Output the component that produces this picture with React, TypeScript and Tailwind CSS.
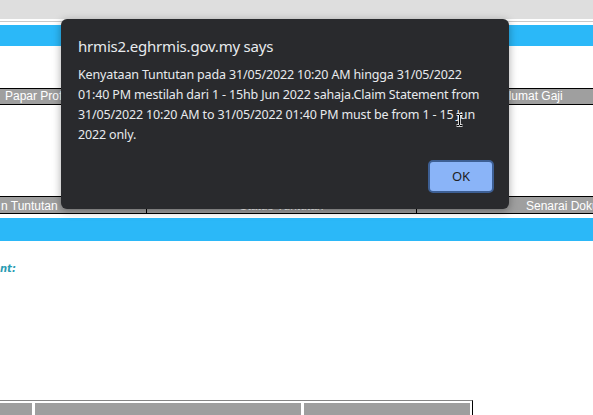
export default function App() {
  const bar = "bg-[#9f9f9f] text-white text-[12px] leading-[15px] whitespace-nowrap";
  return (
    <div className="relative w-[593px] h-[415px] overflow-hidden bg-white" style={{ fontFamily: '"Liberation Sans", Arial, sans-serif' }}>
      {/* page behind the dialog */}
      <div className="h-[19px] bg-[#dedede]" />
      <div className="h-[2px]" />
      <div className="h-px bg-[#c9c9c9]" />
      <div className="h-[3px]" />
      <div className="h-[21px] bg-[#2bb8f8]" />
      <div className="h-[42px]" />

      <div className="flex h-[17px] border-y border-black">
        <div className={`${bar} flex-1 pl-[5px]`}>Papar Profil</div>
        <div className={`${bar} w-[112px] shrink-0 border-l border-black pl-[4px]`}>Maklumat Gaji</div>
      </div>

      <div className="h-[91px]" />

      <div className="flex h-[18px] border-y border-black">
        <div className={`${bar} w-[146px] shrink-0 pt-[2px] pl-px`}>n Tuntutan</div>
        <div className={`${bar} w-[270px] shrink-0 border-l border-black pt-[2px] text-center`}>Status Tuntutan</div>
        <div className={`${bar} flex-1 min-w-0 overflow-hidden border-l border-black pt-[2px] pl-[109px]`}>Senarai Dokumen</div>
      </div>

      <div className="h-[4px]" />
      <div className="h-[23px] bg-[#2bb8f8]" />

      <div className="h-[21px]" />
      <div className="text-[10px] leading-[13px] italic font-bold text-[#2a9cb3]" style={{ fontFamily: '"DejaVu Sans", Verdana, sans-serif' }}>
        nt:
      </div>

      <div className="h-[125px]" />
      <div className="w-[473px] border-t border-[#858585] border-r border-r-black">
        <div className="flex gap-[3px] pt-[2px] h-[15px] pr-[2px]">
          <div className="w-[32px] bg-[#9e9e9e]" />
          <div className="w-[266px] bg-[#9e9e9e]" />
          <div className="flex-1 bg-[#9e9e9e]" />
        </div>
      </div>

      {/* alert dialog */}
      <div
        className="absolute left-[61px] top-[19px] w-[448px] h-[190px] rounded-[6px] bg-[#292a2d] text-[#e8eaed] shadow-[0_2px_8px_rgba(0,0,0,0.35)]"
        style={{ fontFamily: '"Noto Sans", "Open Sans", sans-serif' }}
      >
        <div className="pl-[17px] pt-[17px] text-[15px] leading-[20px] tracking-[-0.2px]">hrmis2.eghrmis.gov.my says</div>
        <div className="pl-[17px] pt-[9px] text-[12.5px] leading-[20px] whitespace-nowrap tracking-[-0.15px]">
          Kenyataan Tuntutan pada 31/05/2022 10:20 AM hingga 31/05/2022
          <br />
          01:40 PM mestilah dari 1 - 15hb Jun 2022 sahaja.Claim Statement from
          <br />
          31/05/2022 10:20 AM to 31/05/2022 01:40 PM must be from 1 - 15 Jun
          <br />
          2022 only.
        </div>
        <div className="flex justify-end pr-[15px] pt-[15px]">
          <button className="w-[66px] h-[33px] rounded-[5px] border-2 border-[#3d5f94] bg-[#8ab4f8] text-[#202124] text-[13px]">
            OK
          </button>
        </div>
      </div>

      {/* text cursor */}
      <svg className="absolute left-[455px] top-[113px]" width="9" height="14" viewBox="0 0 9 14">
        <path d="M1.5 1.5h2.5l0.5 0.5 0.5-0.5h2.5M4.5 2v10M1.5 12.5h2.5l0.5-0.5 0.5 0.5h2.5" stroke="#fff" strokeWidth="2.5" fill="none" />
        <path d="M1.5 1.5h2.5l0.5 0.5 0.5-0.5h2.5M4.5 2v10M1.5 12.5h2.5l0.5-0.5 0.5 0.5h2.5" stroke="#000" strokeWidth="1" fill="none" />
      </svg>
    </div>
  );
}
